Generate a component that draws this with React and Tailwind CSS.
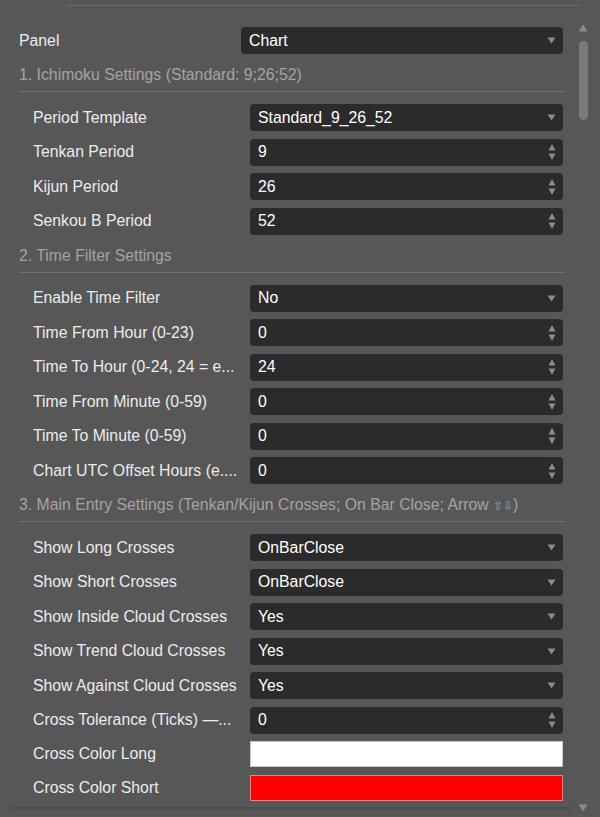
const SelectArrow = () => (
  <svg width="9" height="7" viewBox="0 0 9 7" className="shrink-0">
    <path d="M0.5 0.5h8L4.5 6.5z" fill="#8c8c8c" />
  </svg>
)

const Spinner = () => (
  <svg width="8" height="20" viewBox="0 0 8 20" className="shrink-0">
    <path d="M4 2L7.5 8.5h-7z" fill="#8c8c8c" />
    <path d="M0.5 11.5h7L4 18z" fill="#8c8c8c" />
  </svg>
)

function Control({ type, value }) {
  if (type === 'white') {
    return <div className="h-[26px] flex-1 border border-[#c8c8c8] bg-white" />
  }
  if (type === 'red') {
    return <div className="h-[26px] flex-1 border border-[#f08080] bg-[#ff0000]" />
  }
  return (
    <div className="flex h-[27px] flex-1 items-center justify-between rounded-[4px] bg-[#2b2b2b] pl-[8px] pr-[7px] text-[15.8px] text-white">
      <span>{value}</span>
      {type === 'select' ? <SelectArrow /> : <Spinner />}
    </div>
  )
}

function Row({ label, type, value, color }) {
  const h = color ? 'h-[26px]' : 'h-[27px]'
  return (
    <div className={'flex items-center ' + h}>
      <div className="w-[217px] shrink-0 overflow-hidden whitespace-nowrap text-[15.8px] text-[#ececec]">{label}</div>
      <Control type={type} value={value} />
    </div>
  )
}

function Section({ title, rows }) {
  return (
    <>
      <div className="h-[37px] whitespace-nowrap pt-[12px] text-[15.8px] leading-[18px] text-[#a3a3a3]">{title}</div>
      <div className="mr-[-2px] h-px bg-[#6e6e6e]" />
      <div className="mt-[12px] flex flex-col gap-[7.5px] pl-[14px]">
        {rows.map((r) => (
          <Row key={r.label} {...r} />
        ))}
      </div>
    </>
  )
}

const ichimoku = [
  { label: 'Period Template', type: 'select', value: 'Standard_9_26_52' },
  { label: 'Tenkan Period', type: 'spin', value: '9' },
  { label: 'Kijun Period', type: 'spin', value: '26' },
  { label: 'Senkou B Period', type: 'spin', value: '52' },
]

const timeFilter = [
  { label: 'Enable Time Filter', type: 'select', value: 'No' },
  { label: 'Time From Hour (0-23)', type: 'spin', value: '0' },
  { label: 'Time To Hour (0-24, 24 = e...', type: 'spin', value: '24' },
  { label: 'Time From Minute (0-59)', type: 'spin', value: '0' },
  { label: 'Time To Minute (0-59)', type: 'spin', value: '0' },
  { label: 'Chart UTC Offset Hours (e....', type: 'spin', value: '0' },
]

const entry = [
  { label: 'Show Long Crosses', type: 'select', value: 'OnBarClose' },
  { label: 'Show Short Crosses', type: 'select', value: 'OnBarClose' },
  { label: 'Show Inside Cloud Crosses', type: 'select', value: 'Yes' },
  { label: 'Show Trend Cloud Crosses', type: 'select', value: 'Yes' },
  { label: 'Show Against Cloud Crosses', type: 'select', value: 'Yes' },
  { label: 'Cross Tolerance (Ticks) —...', type: 'spin', value: '0' },
]

export default function App() {
  return (
    <div
      className="relative h-[817px] w-[600px] overflow-hidden bg-[#575757]"
      style={{ fontFamily: '"Liberation Sans", Arial, sans-serif' }}
    >
      <div className="ml-[67px] mt-[5px] h-px w-[513px] bg-[#6b6b6b]" />

      <div className="pl-[19px] pr-[37px] pt-[21px]">
        <div className="flex h-[27px] items-center">
          <div className="w-[222px] shrink-0 text-[15.8px] text-[#ececec]">Panel</div>
          <Control type="select" value="Chart" />
        </div>

        <Section title="1. Ichimoku Settings (Standard: 9;26;52)" rows={ichimoku} />
        <Section title="2. Time Filter Settings" rows={timeFilter} />
        <Section
          title={
            <>
              3. Main Entry Settings (Tenkan/Kijun Crosses; On Bar Close; Arrow{' '}
              <span className="text-[12px]">⇧⇩</span>)
            </>
          }
          rows={entry}
        />

        <div className="mt-[7px] flex flex-col gap-[8px] pl-[14px]">
          <Row label="Cross Color Long" type="white" color />
          <Row label="Cross Color Short" type="red" color />
        </div>
      </div>

      {/* bottom fade of the scroll area */}
      <div className="absolute bottom-[6px] left-[10px] h-[4px] w-[562px] rounded-full bg-gradient-to-b from-[#4a4a4a] to-[#575757]" />

      {/* scrollbar */}
      <div className="absolute right-[12px] top-[24px] flex flex-col items-center">
        <svg width="10" height="8" viewBox="0 0 10 8">
          <path d="M5 0.5L9.5 7.5h-9z" fill="#8a8a8a" />
        </svg>
        <div className="mt-[9px] h-[79px] w-[9px] rounded-full bg-[#7a7a7a]" />
      </div>
      <div className="absolute bottom-[5px] right-[12px]">
        <svg width="10" height="8" viewBox="0 0 10 8">
          <path d="M0.5 0.5h9L5 7.5z" fill="#8a8a8a" />
        </svg>
      </div>
    </div>
  )
}
